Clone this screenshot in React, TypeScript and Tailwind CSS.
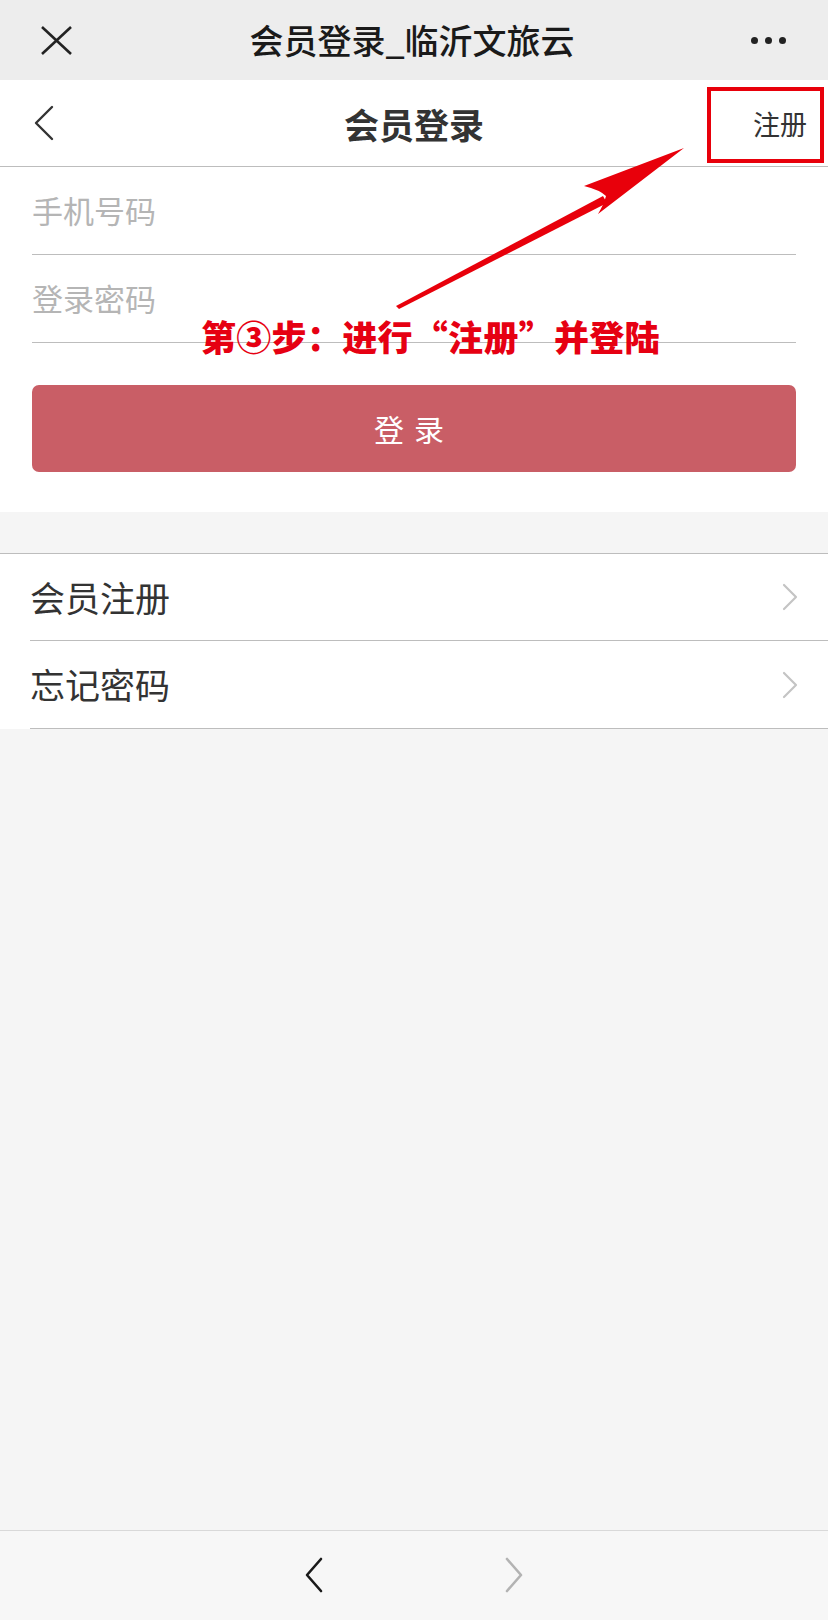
import React from "react";

const font = { fontFamily: '"Noto Sans CJK SC", "Noto Sans", sans-serif' };

function Chevron({ dir, color, w = 18, h = 36, sw = 2.5 }: { dir: "l" | "r"; color: string; w?: number; h?: number; sw?: number }) {
  const pts = dir === "l" ? `${w - 2},2 2,${h / 2} ${w - 2},${h - 2}` : `2,2 ${w - 2},${h / 2} 2,${h - 2}`;
  return (
    <svg width={w} height={h} viewBox={`0 0 ${w} ${h}`}>
      <polyline points={pts} fill="none" stroke={color} strokeWidth={sw} strokeLinecap="round" strokeLinejoin="round" />
    </svg>
  );
}

export default function App() {
  return (
    <div className="relative flex min-h-[1620px] w-[828px] flex-col bg-[#f5f5f5]" style={font}>
      {/* WeChat top bar */}
      <div className="flex h-[80px] items-center justify-between bg-[#ededed] px-[40px]">
        <svg width="33" height="31" viewBox="0 0 33 31">
          <line x1="2" y1="2" x2="31" y2="29" stroke="#222" strokeWidth="2.6" />
          <line x1="31" y1="2" x2="2" y2="29" stroke="#222" strokeWidth="2.6" />
        </svg>
        <div className="text-[34px] font-medium leading-none text-[#1a1a1a]">会员登录_临沂文旅云</div>
        <div className="flex items-center gap-[7px] pr-[2px]">
          <span className="h-[7px] w-[7px] rounded-full bg-[#222]" />
          <span className="h-[7px] w-[7px] rounded-full bg-[#222]" />
          <span className="h-[7px] w-[7px] rounded-full bg-[#222]" />
        </div>
      </div>

      {/* Page header */}
      <div className="relative flex h-[87px] items-center justify-between border-b border-[#bdbdbd] bg-white pl-[34px] pr-[21px]">
        <Chevron dir="l" color="#333" w={20} h={36} sw={2.4} />
        <div className="absolute left-0 right-0 top-0 flex h-[86px] items-center justify-center text-[35px] font-bold leading-none text-[#333]">会员登录</div>
        <div className="text-[27px] leading-none text-[#333]">注册</div>
      </div>

      {/* Form */}
      <div className="bg-white px-[32px] pb-[40px]">
        <div className="flex h-[88px] items-center border-b border-[#bdbdbd] text-[31px] text-[#b5b5b5]">手机号码</div>
        <div className="flex h-[88px] items-center border-b border-[#bdbdbd] text-[31px] text-[#b5b5b5]">登录密码</div>
        <button className="mt-[42px] flex h-[87px] w-full items-center justify-center rounded-[7px] bg-[#c95e66] text-[30px] tracking-[10px] text-white">
          登录
        </button>
      </div>

      {/* List */}
      <div className="mt-[41px] border-t border-[#bdbdbd] bg-white">
        <div className="ml-[30px] flex h-[87px] items-center justify-between border-b border-[#bdbdbd] pr-[30px]">
          <span className="text-[35px] text-[#333]">会员注册</span>
          <Chevron dir="r" color="#c4c4c4" w={16} h={28} sw={2.2} />
        </div>
        <div className="ml-[30px] flex h-[88px] items-center justify-between border-b border-[#bdbdbd] pr-[30px]">
          <span className="text-[35px] text-[#333]">忘记密码</span>
          <Chevron dir="r" color="#c4c4c4" w={16} h={28} sw={2.2} />
        </div>
      </div>

      <div className="flex-1" />

      {/* Bottom nav */}
      <div className="flex h-[90px] items-center justify-center gap-[182px] border-t border-[#d9d9d9] bg-[#f7f7f7] pb-[2px]">
        <Chevron dir="l" color="#1a1a1a" w={18} h={36} sw={2.6} />
        <Chevron dir="r" color="#b3b3b3" w={18} h={36} sw={2.6} />
      </div>

      {/* Annotation overlay */}
      <div className="absolute left-[707px] top-[87px] h-[76px] w-[117px] border-[4px] border-[#e8000b]" />
      <svg className="absolute left-0 top-0" width="828" height="400" viewBox="0 0 828 400">
        <path d="M396 306 L603 196 L607 203 L399 309 Z" fill="#e8000b" />
        <path d="M684 148 L584 186 Q600 190 606 196 Q604 204 598 214 Z" fill="#e8000b" />
      </svg>
      <div className="absolute left-[201px] top-[318px] text-[35px] font-black leading-none tracking-[0.3px] text-[#e60012]">
        第③步：进行“注册”并登陆
      </div>
    </div>
  );
}
